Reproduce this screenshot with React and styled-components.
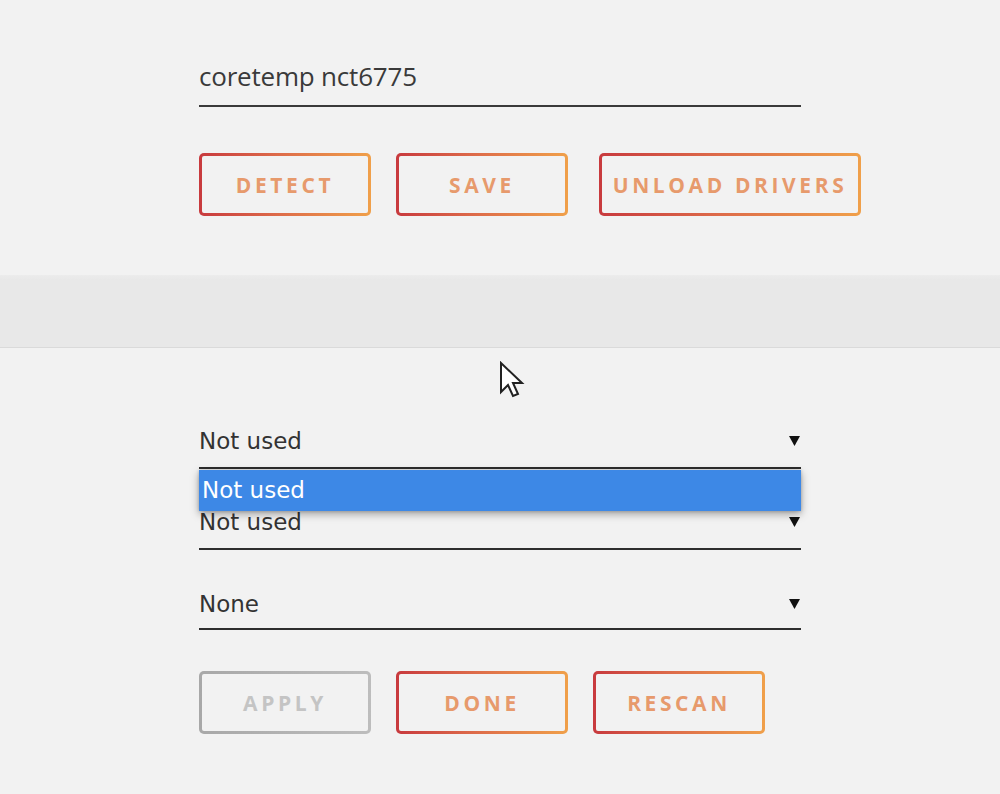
import React from "react";
import styled, { createGlobalStyle } from "styled-components";

const GlobalStyle = createGlobalStyle`
  html, body {
    margin: 0;
    padding: 0;
    background: #f2f2f2;
  }
  #root {
    min-height: 794px;
  }
`;

const Page = styled.div`
  position: relative;
  width: 1000px;
  height: 794px;
  overflow: hidden;
  background: #f2f2f2;
`;

const Section = styled.section`
  width: 602px;
  margin: 0 auto;
  padding: ${(p) => p.$pad};
`;

const Band = styled.div`
  height: 72px;
  background: linear-gradient(#ececec 0px, #e8e8e8 5px, #e8e8e8 100%);
  border-bottom: 1px solid #dadada;
`;

const TextField = styled.div`
  height: 55px;
  box-sizing: border-box;
  border-bottom: 2px solid #3a3a3a;
  line-height: 49px;
  font-family: "Open Sans", sans-serif;
  font-size: 26px;
  letter-spacing: -0.2px;
  color: #3a3a3a;
`;

const SelectWrap = styled.div`
  position: relative;
  margin-top: ${(p) => p.$top}px;
`;

const SelectField = styled.div`
  display: flex;
  align-items: center;
  justify-content: space-between;
  height: ${(p) => p.$h}px;
  box-sizing: border-box;
  border-bottom: 2px solid #2e2e2e;
  padding-bottom: ${(p) => p.$pb}px;
  font-family: "DejaVu Sans", sans-serif;
  font-size: 23px;
  color: #333;
`;

const Arrow = styled.svg`
  width: 11px;
  height: 10px;
  margin-right: 1px;
`;

const Menu = styled.div`
  position: absolute;
  left: 0;
  right: 0;
  top: calc(100% + 1px);
  height: 41px;
  background: #3d88e6;
  box-shadow: 0 3px 8px rgba(0, 0, 0, 0.35), 0 0 3px rgba(0, 0, 0, 0.2);
  z-index: 2;
`;

const MenuItem = styled.div`
  padding-left: 3px;
  line-height: 41px;
  font-family: "DejaVu Sans", sans-serif;
  font-size: 23px;
  color: #fff;
`;

const ButtonRow = styled.div`
  display: flex;
  gap: 25px;
  margin-top: ${(p) => p.$top}px;
`;

const Button = styled.button`
  flex: 0 0 auto;
  box-sizing: border-box;
  width: ${(p) => p.$w}px;
  height: 63px;
  margin-left: ${(p) => p.$shift || 0}px;
  padding: 0;
  border: 3px solid transparent;
  border-radius: 5px;
  background: linear-gradient(#f2f2f2, #f2f2f2) padding-box,
    ${(p) =>
      p.disabled
        ? "linear-gradient(90deg, #a8a8a8, #bdbdbd)"
        : "linear-gradient(90deg, #c83a3e, #dd6b4a 45%, #f0a04a)"}
      border-box;
  font-family: "Open Sans", sans-serif;
  font-weight: 700;
  font-size: 21px;
  letter-spacing: 3.6px;
  text-indent: 0;
  white-space: nowrap;
  text-transform: uppercase;
  color: ${(p) => (p.disabled ? "#c4c4c4" : "#e79a6c")};
  cursor: pointer;
`;

const Cursor = styled.svg`
  position: absolute;
  left: 499px;
  top: 361px;
  width: 28px;
  height: 42px;
  z-index: 5;
`;

const Caret = () => (
  <Arrow viewBox="0 0 11 10">
    <path d="M0 0 H11 L5.5 10 Z" fill="#111" />
  </Arrow>
);

export default function App() {
  return (
    <Page>
      <GlobalStyle />
      <Section $pad="52px 0 59px">
        <TextField>coretemp nct6775</TextField>
        <ButtonRow $top={46}>
          <Button $w={172}>Detect</Button>
          <Button $w={172}>Save</Button>
          <Button $w={262} $shift={6}>Unload drivers</Button>
        </ButtonRow>
      </Section>
      <Band />
      <Section $pad="0">
        <SelectWrap $top={67}>
          <SelectField $h={54} $pb={0}>
            <span>Not used</span>
            <Caret />
          </SelectField>
          <Menu>
            <MenuItem>Not used</MenuItem>
          </Menu>
        </SelectWrap>
        <SelectWrap $top={27}>
          <SelectField $h={54} $pb={0}>
            <span>Not used</span>
            <Caret />
          </SelectField>
        </SelectWrap>
        <SelectWrap $top={30}>
          <SelectField $h={50} $pb={-2}>
            <span>None</span>
            <Caret />
          </SelectField>
        </SelectWrap>
        <ButtonRow $top={41}>
          <Button $w={172} disabled>Apply</Button>
          <Button $w={172}>Done</Button>
          <Button $w={172}>Rescan</Button>
        </ButtonRow>
      </Section>
      <Cursor viewBox="0 0 28 42">
        <path
          d="M2 2 L2 31 L9 24 L14 35 L19 33 L14 22 L23 22 Z"
          fill="#fff"
          stroke="#222"
          strokeWidth="2"
          strokeLinejoin="miter"
        />
      </Cursor>
    </Page>
  );
}
